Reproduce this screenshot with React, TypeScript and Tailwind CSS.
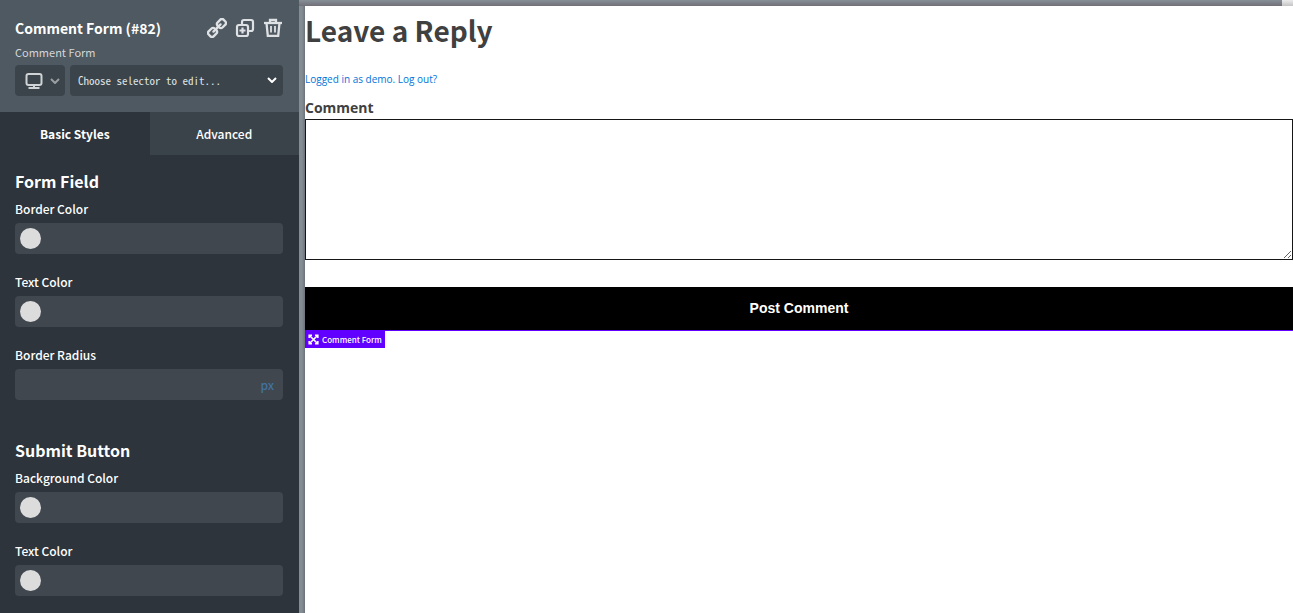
import { useState } from "react";

function LinkIcon() {
  return (
    <svg viewBox="0 0 20 20" className="h-5 w-5" fill="none" stroke="currentColor" strokeWidth="2.4">
      <g transform="rotate(-45 10 10)">
        <rect x="-0.500" y="6.500" width="8.500" height="7" rx="2.200" />
        <rect x="12" y="6.500" width="8.500" height="7" rx="2.200" />
        <path d="M5 10h10" strokeLinecap="round" />
      </g>
    </svg>
  );
}

function DuplicateIcon() {
  return (
    <svg viewBox="0 0 20 20" className="h-5 w-5" fill="none" stroke="currentColor" strokeWidth="2.2">
      <rect x="2" y="7" width="11" height="11" rx="2" />
      <path d="M7 6.500V4a2 2 0 0 1 2-2h7a2 2 0 0 1 2 2v7a2 2 0 0 1-2 2h-2.500" />
      <path d="M7.500 9.500v6M4.500 12.500h6" />
    </svg>
  );
}

function TrashIcon() {
  return (
    <svg viewBox="0 0 20 20" className="h-5 w-5" fill="none" stroke="currentColor" strokeWidth="2.3">
      <path d="M1 5h18" />
      <path d="M7 4.500V2h6v2.500" />
      <path d="M3.500 5l1.300 12.800h10.400l1.300-12.800" />
      <path d="M8 8v6.500M12 8v6.500" strokeWidth="1.800" />
    </svg>
  );
}

function MonitorIcon() {
  return (
    <svg viewBox="0 0 18 18" className="h-[18px] w-[18px]" fill="none" stroke="currentColor" strokeWidth="2">
      <rect x="1.500" y="2" width="15" height="11" rx="2" />
      <path d="M3.500 16h11M9 13v3" />
    </svg>
  );
}

function Chevron({ className }: { className: string }) {
  return (
    <svg viewBox="0 0 10 6" className={className} fill="none" stroke="currentColor" strokeWidth="2">
      <path d="M1 1l4 4 4-4" />
    </svg>
  );
}

function ExpandIcon() {
  return (
    <svg viewBox="0 0 11 11" className="h-[11px] w-[11px]" fill="none" stroke="currentColor" strokeWidth="1.600">
      <path d="M1.200 4V1.200h2.800M7 1.200h2.800v2.800M9.800 7v2.800H7M4 9.800H1.200V7" />
      <path d="M1.500 1.500l8 8M9.500 1.500l-8 8" />
    </svg>
  );
}

function ColorField({ id, label }: { id: string; label: string }) {
  return (
    <div>
      <label htmlFor={id} className="block text-xs leading-5">{label}</label>
      <div className="mt-1 flex h-[31px] items-center gap-2 rounded bg-[#40474f] px-[5px]">
        <button type="button" aria-label={`Pick ${label}`} className="h-[21px] w-[21px] shrink-0 rounded-full bg-[#dcdcdc]" />
        <input id={id} type="text" className="min-w-0 flex-1 bg-transparent text-xs outline-none" />
      </div>
    </div>
  );
}

function Sidebar() {
  const [tab, setTab] = useState("basic");
  const on = "flex-1 bg-[#2d343b] font-bold";
  const off = "flex-1 bg-[#3b434a]";
  return (
    <aside className="flex w-[299px] shrink-0 flex-col bg-[#2d343b] font-['Noto_Sans_CJK_SC',sans-serif] font-medium text-white">
      <header className="h-28 bg-[#4f5961] pt-[18px] pr-4 pl-[15px]">
        <div className="flex h-5 items-center justify-between">
          <h2 className="text-sm leading-5 font-bold">Comment Form (#82)</h2>
          <div className="flex gap-2 text-[#dfe2e4]">
            <button type="button" aria-label="Link"><LinkIcon /></button>
            <button type="button" aria-label="Duplicate"><DuplicateIcon /></button>
            <button type="button" aria-label="Delete"><TrashIcon /></button>
          </div>
        </div>
        <p className="mt-1 text-[11px] leading-5 font-normal text-[#d3d6d9]">Comment Form</p>
        <div className="mt-[3px] flex gap-[5px]">
          <button type="button" aria-label="Screen size" className="flex h-[31px] w-[50px] items-center justify-end gap-[7px] rounded bg-[#3b444a] pr-[5px] text-[#d0d3d5]">
            <MonitorIcon />
            <Chevron className="h-[6px] w-[10px] text-[#9a9fa3]" />
          </button>
          <div className="relative flex-1">
            <select aria-label="Selector" className="h-[31px] w-full appearance-none rounded bg-[#3b444a] pl-2 font-['Noto_Sans_Mono_CJK_SC','Liberation_Mono',monospace] text-[11px] font-normal text-[#dfe2e4]">
              <option>Choose selector to edit...</option>
            </select>
            <Chevron className="pointer-events-none absolute top-3 right-[6px] h-[6px] w-[10px] text-white" />
          </div>
        </div>
      </header>
      <nav className="flex h-[43px] text-xs">
        <button type="button" className={tab === "basic" ? on : off} onClick={() => setTab("basic")}>Basic Styles</button>
        <button type="button" className={tab === "advanced" ? on : off} onClick={() => setTab("advanced")}>Advanced</button>
      </nav>
      <div className="flex flex-col gap-[38px] pt-[14px] pr-4 pl-[15px]">
        <section>
          <h3 className="mb-[6px] text-base leading-6 font-bold">Form Field</h3>
          <div className="flex flex-col gap-[18px]">
            <ColorField id="field-border" label="Border Color" />
            <ColorField id="field-text" label="Text Color" />
            <div>
              <label htmlFor="field-radius" className="block text-xs leading-5">Border Radius</label>
              <div className="mt-1 flex h-[31px] items-center rounded bg-[#40474f] pr-[9px] pl-2">
                <input id="field-radius" type="text" className="min-w-0 flex-1 bg-transparent text-xs outline-none" />
                <span className="text-xs leading-5 font-medium text-[#42729f]">px</span>
              </div>
            </div>
          </div>
        </section>
        <section>
          <h3 className="mb-[6px] text-base leading-6 font-bold">Submit Button</h3>
          <div className="flex flex-col gap-[18px]">
            <ColorField id="submit-background" label="Background Color" />
            <ColorField id="submit-text" label="Text Color" />
          </div>
        </section>
      </div>
    </aside>
  );
}

function Preview() {
  return (
    <div className="flex min-w-0 flex-1 flex-col bg-[#838b92]">
      <div className="flex h-[6px] shrink-0 bg-linear-to-b from-[#869097] to-[#716f78]">
        <span className="ml-auto w-[11px] bg-linear-to-b from-[#ececec] to-[#c4c4c4]" />
      </div>
      <div className="flex min-h-0 flex-1">
        <div className="w-[6px] shrink-0 bg-linear-to-r from-[#858d94] from-50% to-[#6c727a]" />
        <main className="flex-1 bg-white font-['Open_Sans',sans-serif] text-[#404040]">
          <h1 className="pt-1 font-['Noto_Sans_CJK_SC',sans-serif] text-[28px] leading-10 font-bold">Leave a Reply</h1>
          <p className="mt-5 text-[10px] leading-[18px] text-[#0074db]">
            <a href="#profile">Logged in as demo</a>. <a href="#logout">Log out?</a>
          </p>
          <form onSubmit={(e) => e.preventDefault()}>
            <label htmlFor="comment" className="mt-[10px] block text-sm leading-5 font-bold">Comment</label>
            <textarea id="comment" className="mt-px block h-[141px] w-full resize border border-[#161616] bg-white p-2 text-sm outline-none" />
            <button type="submit" className="mt-[27px] block h-11 w-full border-b border-[#6200ff] bg-black pb-px font-['Liberation_Sans',sans-serif] text-sm font-bold text-white">Post Comment</button>
          </form>
          <div className="flex h-[17px] w-20 items-center gap-[3px] bg-[#6200ff] pl-[3px] font-['Noto_Sans_CJK_SC',sans-serif] text-[8px] font-medium whitespace-nowrap text-white">
            <ExpandIcon />
            <span>Comment Form</span>
          </div>
        </main>
      </div>
    </div>
  );
}

export default function App() {
  return (
    <div className="flex min-h-screen">
      <Sidebar />
      <Preview />
    </div>
  );
}
